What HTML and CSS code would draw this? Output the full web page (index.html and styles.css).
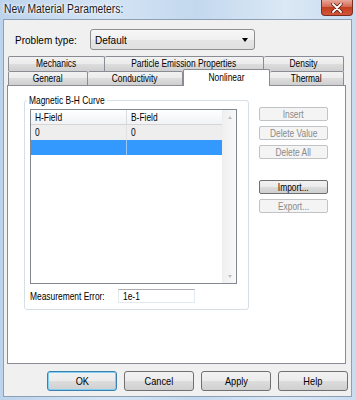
FILE: index.html
```html
<!DOCTYPE html>
<html lang="en">
<head>
    <meta charset="UTF-8">
    <title>New Material Parameters</title>
    <link rel="stylesheet" href="styles.css">
</head>
<body>
    <div class="titlebar">
        <span class="title t">New Material Parameters:</span>
        <div class="close">
            <svg width="12" height="10" viewBox="0 0 12 10">
                <path d="M2 1 L10 9 M10 1 L2 9" stroke="#5a1a10" stroke-width="3.4" stroke-linecap="round"/>
                <path d="M2 1 L10 9 M10 1 L2 9" stroke="#ffffff" stroke-width="1.8" stroke-linecap="round"/>
            </svg>
        </div>
    </div>

    <div class="client">
        <div class="type-row">
            <label class="type-label"><span class="t wide">Problem type:</span></label>
            <div class="combo">
                <span class="t wide">Default</span>
                <span class="combo-arrow"></span>
            </div>
        </div>

        <div class="tabs">
            <div class="tab-row">
                <div class="tab" style="width: 97px"><span class="t">Mechanics</span></div>
                <div class="tab" style="width: 159px"><span class="t">Particle Emission Properties</span></div>
                <div class="tab" style="width: 80px"><span class="t">Density</span></div>
            </div>
            <div class="tab-row row2">
                <div class="tab" style="width: 80px"><span class="t">General</span></div>
                <div class="tab" style="width: 95px"><span class="t">Conductivity</span></div>
                <div class="tab selected" style="width: 87px"><span class="t">Nonlinear</span></div>
                <div class="tab" style="width: 74px"><span class="t">Thermal</span></div>
            </div>
        </div>

        <div class="panel">
            <fieldset class="group">
                <legend><span class="t">Magnetic B-H Curve</span></legend>
                <div class="listview">
                    <div class="lv-main">
                        <div class="lv-row lv-header">
                            <div class="cell c1"><span class="t">H-Field</span></div>
                            <div class="cell c2"><span class="t">B-Field</span></div>
                        </div>
                        <div class="lv-row lv-item">
                            <div class="cell c1"><span class="t">0</span></div>
                            <div class="cell c2"><span class="t">0</span></div>
                        </div>
                        <div class="lv-row lv-item active">
                            <div class="cell c1"></div>
                            <div class="cell c2"></div>
                        </div>
                    </div>
                    <div class="lv-scroll">
                        <span class="arrow-up"></span>
                        <span class="arrow-down"></span>
                    </div>
                </div>
                <div class="error-row">
                    <label class="error-label"><span class="t">Measurement Error:</span></label>
                    <div class="textbox"><span class="t">1e-1</span></div>
                </div>
            </fieldset>

            <div class="side-buttons">
                <div class="btn disabled"><span class="t">Insert</span></div>
                <div class="btn disabled"><span class="t">Delete Value</span></div>
                <div class="btn disabled"><span class="t">Delete All</span></div>
                <div class="btn spaced"><span class="t">Import...</span></div>
                <div class="btn disabled"><span class="t">Export...</span></div>
            </div>
        </div>

        <div class="dialog-buttons">
            <div class="dbtn default"><span class="t">OK</span></div>
            <div class="dbtn"><span class="t">Cancel</span></div>
            <div class="dbtn"><span class="t">Apply</span></div>
            <div class="dbtn"><span class="t">Help</span></div>
        </div>
    </div>
</body>
</html>
```

FILE: styles.css
```css
* {
    box-sizing: border-box;
}
body {
    margin: 0;
    width: 356px;
    height: 400px;
    overflow: hidden;
    background: linear-gradient(90deg, #bcd3ec 0%, #d4e4f4 30%, #c3d8ee 55%, #dbe8f5 80%, #c9dcf0 100%);
    font-family: "Liberation Sans", Arial, sans-serif;
    font-size: 10.5px;
    color: #000;
}
/* the dialog font is narrow, squeeze the text a bit */
.t {
    display: inline-block;
    white-space: nowrap;
    transform: scaleX(0.8);
}
.title, .type-label .t, .combo .t, .cell .t, .error-label .t, .textbox .t, legend .t {
    transform-origin: 0 50%;
}
.t.wide {
    transform: scaleX(0.87);
}
.titlebar {
    height: 19px;
    display: flex;
    justify-content: space-between;
    align-items: flex-start;
    padding-left: 4px;
}
.title {
    font-size: 12px;
    line-height: 18px;
    color: #1c1c1c;
    text-shadow: 0 0 5px #fff, 0 0 3px #fff;
    transform: scaleX(0.86);
}
.close {
    width: 32px;
    height: 16px;
    margin-right: 3px;
    border: 1px solid #7a2e22;
    border-top: none;
    border-radius: 0 0 4px 4px;
    background: linear-gradient(#e9a898 0%, #d46a55 45%, #c1401f 50%, #d4553a 100%);
    display: flex;
    align-items: center;
    justify-content: center;
}
.client {
    margin: 0 4px 0 3px;
    height: 378px;
    background-color: #f0f0f0;
    border: 1px solid #8c9fb5;
    display: flex;
    flex-direction: column;
}
.type-row {
    margin-top: 9px;
    height: 21px;
    display: flex;
    align-items: center;
}
.type-label {
    width: 86px;
    padding-left: 11px;
    font-size: 11.5px;
}
.combo {
    width: 165px;
    height: 21px;
    border: 1px solid #8e8f8f;
    border-radius: 3px;
    background: linear-gradient(#f7f7f7, #f0f0f0 50%, #e5e5e5 50%, #e0e0e0);
    display: flex;
    align-items: center;
    justify-content: space-between;
    padding: 0 6px 0 4px;
    font-size: 11.5px;
}
.combo-arrow {
    width: 0;
    height: 0;
    border-left: 3.5px solid transparent;
    border-right: 3.5px solid transparent;
    border-top: 4px solid #000;
}
.tabs {
    margin: 6px 0 0 4px;
    width: 336px;
}
.tab-row {
    display: flex;
    height: 15px;
}
.tab-row.row2 {
    height: 14px;
}
.tab {
    height: 100%;
    border: 1px solid #898c95;
    border-bottom: none;
    border-radius: 2px 2px 0 0;
    background: linear-gradient(#f2f2f2, #ebebeb 50%, #dddddd 50%, #cfcfcf);
    text-align: center;
    line-height: 13px;
    white-space: nowrap;
}
.tab + .tab {
    border-left: none;
}
.tab.selected {
    position: relative;
    z-index: 1;
    height: 17px;
    margin-top: -2px;
    background: #fff;
    border-left: 1px solid #898c95;
    line-height: 15px;
}
.panel {
    margin-left: 3px;
    width: 339px;
    height: 279px;
    background-color: #fff;
    border: 1px solid #898c95;
    display: flex;
    align-items: flex-start;
    padding: 8px 0 0 16px;
}
.group {
    width: 225px;
    height: 216px;
    margin: 0;
    padding: 0 0 0 5px;
    border: 1px solid #d5dfe5;
    border-radius: 3px;
}
.group legend {
    margin-left: -3px;
    padding: 0 2px;
    line-height: 12px;
    width: 80px;
}
.listview {
    margin-top: 3px;
    width: 207px;
    height: 175px;
    border: 1px solid #828790;
    display: flex;
}
.lv-main {
    flex: 1;
}
.lv-row {
    display: flex;
    height: 15px;
    line-height: 14px;
}
.cell {
    padding-left: 4px;
}
.c1 {
    width: 96px;
    border-right: 1px solid #e2e2e2;
}
.c2 {
    flex: 1;
}
.lv-header {
    background: linear-gradient(#ffffff, #f7f8fa 50%, #f1f2f4);
    border-bottom: 1px solid #d5d5d5;
}
.lv-header .c1 {
    border-right-color: #dcdcdc;
}
.lv-item {
    background-color: #eeeeee;
}
.lv-item.active {
    background-color: #3399ff;
}
.lv-item.active .c1 {
    border-right-color: #9cc8f5;
}
.lv-scroll {
    width: 14px;
    background: linear-gradient(90deg, #f0f0f0, #f8f8f8);
    border-left: 1px solid #ededed;
    display: flex;
    flex-direction: column;
    justify-content: space-between;
    align-items: center;
    padding: 6px 0 5px;
}
.arrow-up, .arrow-down {
    width: 0;
    height: 0;
    border-left: 2.5px solid transparent;
    border-right: 2.5px solid transparent;
}
.arrow-up {
    border-bottom: 3px solid #bfbfbf;
}
.arrow-down {
    border-top: 3px solid #bfbfbf;
}
.error-row {
    margin-top: 5px;
    display: flex;
    align-items: center;
}
.error-label {
    width: 88px;
    white-space: nowrap;
}
.textbox {
    width: 77px;
    height: 14px;
    border: 1px solid #e3e9ef;
    border-top-color: #abadb3;
    background-color: #fff;
    padding-left: 4px;
    line-height: 12px;
}
.side-buttons {
    margin: 13px 0 0 10px;
    width: 69px;
    display: flex;
    flex-direction: column;
    gap: 5px;
}
.btn {
    height: 14px;
    border: 1px solid #707070;
    border-radius: 2px;
    background: linear-gradient(#f2f2f2, #ebebeb 50%, #dddddd 50%, #cfcfcf);
    text-align: center;
    line-height: 12px;
    white-space: nowrap;
}
.btn.spaced {
    margin-top: 16px;
}
.btn.disabled {
    border-color: #c0c4c7;
    background: #f4f4f4;
    color: #8a8a8a;
}
.dialog-buttons {
    margin-top: 7px;
    display: flex;
    justify-content: flex-end;
    gap: 7px;
    padding-right: 3px;
}
.dbtn {
    width: 70px;
    height: 20px;
    border: 1px solid #707070;
    border-radius: 3px;
    background: linear-gradient(#f2f2f2, #ebebeb 50%, #dddddd 50%, #cfcfcf);
    text-align: center;
    line-height: 18px;
    font-size: 11.5px;
}
.dbtn.default {
    border-color: #3c7fb1;
    box-shadow: inset 0 0 0 1px #7fd1f2;
}
```
